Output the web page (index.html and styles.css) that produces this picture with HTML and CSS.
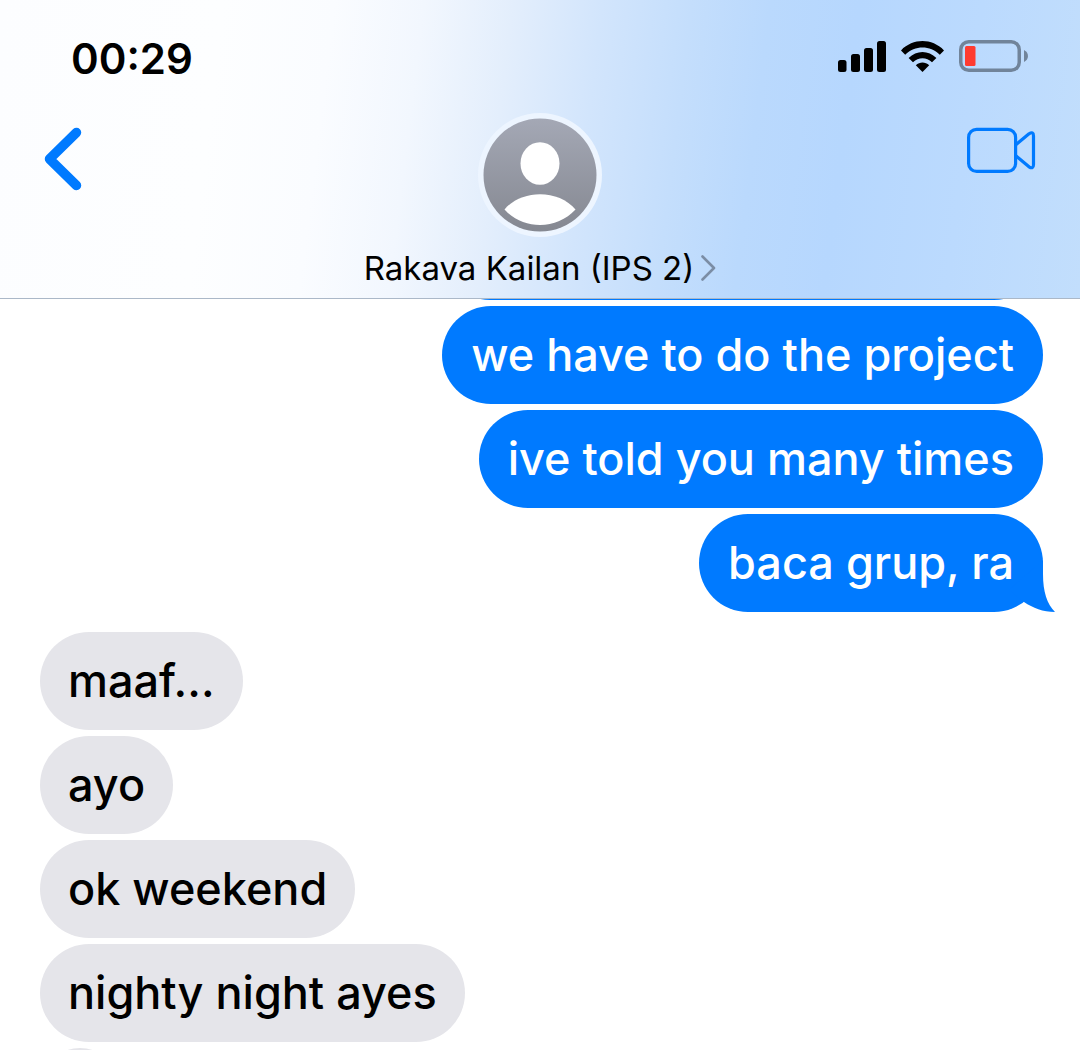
FILE: index.html
```html
<!DOCTYPE html>
<html lang="id">
<head>
  <meta charset="utf-8">
  <meta name="viewport" content="width=device-width, initial-scale=1">
  <title>Rakava Kailan (IPS 2)</title>
  <link rel="stylesheet" href="styles.css">
</head>
<body>
  <header class="header">
    <div class="status">
      <time class="clock">00:29</time>
      <div class="status-icons">
        <svg width="48" height="32" viewBox="0 0 48 32" aria-hidden="true">
          <rect x="0" y="20" width="8.5" height="12" rx="2.5"/>
          <rect x="13" y="14" width="9" height="18" rx="2.5"/>
          <rect x="26" y="8" width="9" height="24" rx="2.5"/>
          <rect x="39" y="1" width="9" height="31" rx="2.5"/>
        </svg>
        <svg width="43" height="32" viewBox="0 0 43 32" aria-hidden="true">
          <path d="M0 10.4C12 -2 31 -2 43 10.4L38.8 14.8C29 5.2 14 5.2 4.2 14.8Z"/>
          <path d="M7.6 18C15.5 10 27.5 10 35.4 18L31 22.2C25.5 17 17.5 17 12 22.2Z"/>
          <path d="M14.8 25.2C18.7 21.7 24.3 21.7 28.2 25.2L21.5 32Z"/>
        </svg>
        <svg width="70" height="32" viewBox="0 0 70 32" aria-hidden="true">
          <rect x="1.75" y="1.75" width="58.5" height="28.5" rx="8" fill="none" stroke="#71849a" stroke-width="3.5"/>
          <rect x="6" y="6" width="10.5" height="20" rx="1.5" fill="#ff3b30"/>
          <path d="M65 10C70.3 12.5 70.3 19.5 65 22Z" fill="#71849a"/>
        </svg>
      </div>
    </div>
    <nav class="nav">
      <button class="icon-button back" aria-label="Back">
        <svg width="38" height="64" viewBox="0 0 38 64">
          <path d="M32.5 5.5L5.5 32L32.5 58.5" fill="none" stroke="#007aff" stroke-width="9.5" stroke-linecap="round" stroke-linejoin="round"/>
        </svg>
      </button>
      <a class="contact" href="#">
        <svg class="avatar" width="124" height="124" viewBox="0 0 124 124" aria-hidden="true">
          <defs>
            <linearGradient id="avatar-fill" x1="0" y1="0" x2="0" y2="1">
              <stop offset="0" stop-color="#a4a8b5"/>
              <stop offset="1" stop-color="#858891"/>
            </linearGradient>
          </defs>
          <circle cx="62" cy="62" r="62" fill="#edf5ff"/>
          <circle cx="62" cy="62" r="56.5" fill="url(#avatar-fill)"/>
          <ellipse cx="62" cy="50.5" rx="19.5" ry="21.3" fill="#fff"/>
          <path d="M26.5 96.5C43 76 81 76 97.5 96.5C79 117 45 117 26.5 96.5Z" fill="#fff"/>
        </svg>
        <span class="contact-name">Rakava Kailan (IPS 2)
          <svg width="15" height="26" viewBox="0 0 15 26" aria-hidden="true">
            <path d="M1.5 1.5L13 13L1.5 24.5" fill="none" stroke="#7b8da5" stroke-width="2.6" stroke-linecap="round" stroke-linejoin="round"/>
          </svg>
        </span>
      </a>
      <button class="icon-button video" aria-label="Video call">
        <svg width="69" height="46" viewBox="0 0 69 46">
          <g fill="none" stroke="#007aff" stroke-width="3.2" stroke-linejoin="round">
            <rect x="1.6" y="2.4" width="47" height="42" rx="8"/>
            <path d="M48.5 18L62 6.8Q66.5 4 66.5 9V37.500Q66.5 42.5 62 39.8L48.500 28.5"/>
          </g>
        </svg>
      </button>
    </nav>
  </header>

  <main class="messages">
    <p class="bubble sent sent-empty"></p>
    <p class="bubble sent">we have to do the project</p>
    <p class="bubble sent">ive told you many times</p>
    <p class="bubble sent last">baca grup, ra
      <svg class="tail" width="46" height="52" viewBox="0 0 46 52" aria-hidden="true">
        <path d="M34 0V14C34 32 38 44 46 52C34 52 24 48 15 42L0 30Z"/>
      </svg>
    </p>
    <p class="bubble received">maaf...</p>
    <p class="bubble received">ayo</p>
    <p class="bubble received">ok weekend</p>
    <p class="bubble received">nighty night ayes</p>
    <p class="bubble received received-empty"></p>
  </main>
</body>
</html>
```

FILE: styles.css
```css
* {
  box-sizing: border-box;
}

body {
  margin: 0;
  height: 100vh;
  display: flex;
  flex-direction: column;
  overflow: hidden;
  background: #fff;
  color: #000;
  font-family: Inter, "Liberation Sans", sans-serif;
}

svg {
  display: block;
  flex: none;
}

/* header */
.header {
  position: relative;
  z-index: 1;
  flex: none;
  border-bottom: 1px solid #abb8c8;
  background: linear-gradient(97deg, #fcfdff 0%, #fdfeff 20%, #fafcff 30%, #f2f7fe 38%, #e3eefc 46%, #d2e5fc 54%, #c4defc 62%, #bad9fd 69%, #b6d7fe 77%, #bbdafe 88%, #c2defc 100%);
}

.status {
  display: flex;
  justify-content: space-between;
  align-items: center;
  padding: 29px 51px 24px 71px;
}

.clock {
  font-size: 42px;
  line-height: 60px;
  font-weight: 600;
}

.status-icons {
  display: flex;
  gap: 15px;
  padding-bottom: 6px;
}

.nav {
  display: grid;
  grid-template-columns: 1fr auto 1fr;
  align-items: start;
  padding: 0 44px;
}

.icon-button {
  margin-top: 14px;
  padding: 0;
  border: 0;
  background: none;
  cursor: pointer;
}

.back {
  justify-self: start;
}

.video {
  justify-self: end;
}

.contact {
  display: flex;
  flex-direction: column;
  align-items: center;
  gap: 11px;
  padding-bottom: 10px;
  color: #000;
  text-decoration: none;
}

.contact-name {
  display: flex;
  align-items: center;
  gap: 7px;
  font-size: 33px;
  line-height: 40px;
}

/* messages */
.messages {
  display: flex;
  flex-direction: column;
  flex: 1;
  min-height: 0;
  gap: 6px;
  margin-top: -97px;
  padding: 0 37px 0 40px;
  overflow: hidden;
}

.bubble {
  position: relative;
  flex: none;
  margin: 0;
  min-height: 98px;
  padding: 22px 29px;
  border-radius: 49px;
  font-size: 45px;
  line-height: 54px;
  font-weight: 500;
}

.sent {
  align-self: flex-end;
  background: #007aff;
  color: #fff;
}

.received {
  align-self: flex-start;
  padding: 22px 28px;
  background: #e5e5ea;
}

.last {
  margin-bottom: 14px;
}

.tail {
  position: absolute;
  right: -12px;
  bottom: 0;
  fill: #007aff;
}

.sent-empty {
  width: 60%;
}

.received-empty {
  width: 80px;
}
```
